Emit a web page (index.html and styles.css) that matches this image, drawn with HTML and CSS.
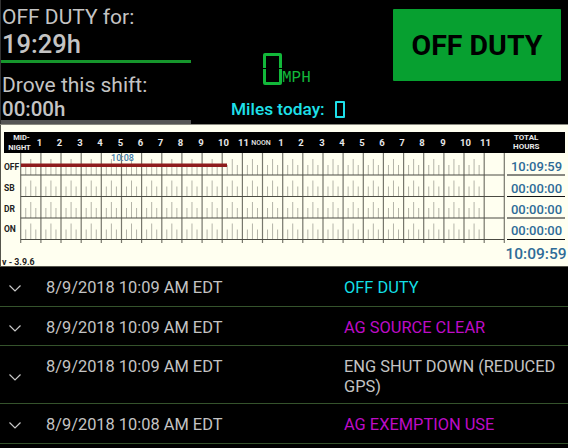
FILE: index.html
```html
<!DOCTYPE html>
<html lang="en">
  <head>
    <meta charset="UTF-8" />
    <meta name="viewport" content="width=device-width, initial-scale=1.0" />
    <title>Driver Log</title>
    <link rel="stylesheet" href="styles.css">
  </head>
  <body>
    <div class="top">
      <div class="status">
        <div class="status-block duty-block">
          <div class="status-label">OFF DUTY for:</div>
          <div class="status-time">19:29h</div>
        </div>
        <div class="status-block shift-block">
          <div class="status-label">Drove this shift:</div>
          <div class="status-small">00:00h</div>
        </div>
      </div>
      <div class="speed">
        <div class="speed-row">
          <span class="digit digit-big">0</span>
          <span class="mph">MPH</span>
        </div>
        <div class="miles">Miles today: <span class="digit digit-small">0</span></div>
      </div>
      <div class="duty-wrap">
        <div class="btn">OFF DUTY</div>
      </div>
    </div>

    <div class="chart">
      <svg class="chart-svg" viewBox="0 125 568 142" width="568" height="142">
        <defs>
          <path id="row-ticks" class="tick" d="M20.7 0m5.04 0v-10m5.04 10v-16m5.04 16v-10m5.03 10m5.04 0v-10m5.04 10v-16m5.04 16v-10m5.03 10m5.04 0v-10m5.04 10v-16m5.04 16v-10m5.03 10m5.04 0v-10m5.04 10v-16m5.04 16v-10m5.03 10m5.04 0v-10m5.04 10v-16m5.04 16v-10m5.03 10m5.04 0v-10m5.04 10v-16m5.04 16v-10m5.03 10m5.04 0v-10m5.04 10v-16m5.04 16v-10m5.03 10m5.04 0v-10m5.04 10v-16m5.04 16v-10m5.03 10m5.04 0v-10m5.04 10v-16m5.04 16v-10m5.03 10m5.04 0v-10m5.04 10v-16m5.04 16v-10m5.03 10m5.04 0v-10m5.04 10v-16m5.04 16v-10m5.03 10m5.04 0v-10m5.04 10v-16m5.04 16v-10m5.03 10m5.04 0v-10m5.04 10v-16m5.04 16v-10m5.03 10m5.04 0v-10m5.04 10v-16m5.04 16v-10m5.03 10m5.04 0v-10m5.04 10v-16m5.04 16v-10m5.03 10m5.04 0v-10m5.04 10v-16m5.04 16v-10m5.03 10m5.04 0v-10m5.04 10v-16m5.04 16v-10m5.03 10m5.04 0v-10m5.04 10v-16m5.04 16v-10m5.03 10m5.04 0v-10m5.04 10v-16m5.04 16v-10m5.03 10m5.04 0v-10m5.04 10v-16m5.04 16v-10m5.03 10m5.04 0v-10m5.04 10v-16m5.04 16v-10m5.03 10m5.04 0v-10m5.04 10v-16m5.04 16v-10m5.03 10m5.04 0v-10m5.04 10v-16m5.04 16v-10m5.03 10" />
        </defs>
        <rect class="head" x="4" y="132" width="561" height="21" />
        <use href="#row-ticks" y="175" />
        <use href="#row-ticks" y="196.5" />
        <use href="#row-ticks" y="218" />
        <use href="#row-ticks" y="239.5" />
        <path class="hour-lines" d="M20.7 153V243M40.9 153V243M61 153V243M81.2 153V243M101.3 153V243M121.5 153V243M141.6 153V243M161.8 153V243M181.9 153V243M202.1 153V243M222.2 153V243M242.4 153V243M262.5 153V243M282.7 153V243M302.8 153V243M323 153V243M343.1 153V243M363.3 153V243M383.4 153V243M403.6 153V243M423.7 153V243M443.9 153V243M464 153V243M484.2 153V243M504.3 153V243" />
        <path class="row-lines" d="M20.7 175H504.3M20.7 196.5H504.3M20.7 218H504.3M20.7 239.5H504.3" />
        <path class="total-lines" d="M507 175H565M507 196.5H565M507 218H565M507 239.5H565" />
        <rect class="off-bar" x="21" y="163.5" width="206" height="3.5" />
        <text class="now-label" x="122.5" y="161" text-anchor="middle">10:08</text>

        <text class="head-small" x="21.5" y="140" text-anchor="middle">MID-</text>
        <text class="head-small" x="19.5" y="149.5" text-anchor="middle">NIGHT</text>
        <text class="head-hour" x="39.5" y="145.5" text-anchor="middle">1</text>
        <text class="head-hour" x="59.5" y="145.5" text-anchor="middle">2</text>
        <text class="head-hour" x="80" y="145.5" text-anchor="middle">3</text>
        <text class="head-hour" x="100" y="145.5" text-anchor="middle">4</text>
        <text class="head-hour" x="120.5" y="145.5" text-anchor="middle">5</text>
        <text class="head-hour" x="140.5" y="145.5" text-anchor="middle">6</text>
        <text class="head-hour" x="160.5" y="145.5" text-anchor="middle">7</text>
        <text class="head-hour" x="180.5" y="145.5" text-anchor="middle">8</text>
        <text class="head-hour" x="201" y="145.5" text-anchor="middle">9</text>
        <text class="head-hour" x="223.5" y="145.5" text-anchor="middle">10</text>
        <text class="head-hour" x="243.5" y="145.5" text-anchor="middle">11</text>
        <text class="head-noon" x="261" y="144.5" text-anchor="middle">NOON</text>
        <text class="head-hour" x="281" y="145.5" text-anchor="middle">1</text>
        <text class="head-hour" x="301" y="145.5" text-anchor="middle">2</text>
        <text class="head-hour" x="322" y="145.5" text-anchor="middle">3</text>
        <text class="head-hour" x="342" y="145.5" text-anchor="middle">4</text>
        <text class="head-hour" x="362" y="145.5" text-anchor="middle">5</text>
        <text class="head-hour" x="382" y="145.5" text-anchor="middle">6</text>
        <text class="head-hour" x="402" y="145.5" text-anchor="middle">7</text>
        <text class="head-hour" x="422" y="145.5" text-anchor="middle">8</text>
        <text class="head-hour" x="443" y="145.5" text-anchor="middle">9</text>
        <text class="head-hour" x="465.5" y="145.5" text-anchor="middle">10</text>
        <text class="head-hour" x="485.5" y="145.5" text-anchor="middle">11</text>
        <text class="head-total" x="514" y="139.5">TOTAL</text>
        <text class="head-total" x="513" y="149">HOURS</text>

        <text class="row-label" x="4" y="170">OFF</text>
        <text class="row-label" x="4" y="191">SB</text>
        <text class="row-label" x="4" y="212">DR</text>
        <text class="row-label" x="4" y="232">ON</text>

        <text class="total" x="536.5" y="171" text-anchor="middle">10:09:59</text>
        <text class="total" x="536.5" y="192.5" text-anchor="middle">00:00:00</text>
        <text class="total" x="536.5" y="214" text-anchor="middle">00:00:00</text>
        <text class="total" x="536.5" y="235" text-anchor="middle">00:00:00</text>
        <text class="total-big" x="536" y="259" text-anchor="middle">10:09:59</text>
        <text class="version" x="2" y="265">v - 3.9.6</text>
      </svg>
    </div>

    <div class="log">
      <div class="log-row">
        <svg class="chevron" viewBox="0 0 12 7" width="12" height="7"><path d="M0.5 0.5L6 6L11.5 0.5" /></svg>
        <div class="log-date">8/9/2018 10:09 AM EDT</div>
        <div class="log-event cyan">OFF DUTY</div>
      </div>
      <div class="log-row">
        <svg class="chevron" viewBox="0 0 12 7" width="12" height="7"><path d="M0.5 0.5L6 6L11.5 0.5" /></svg>
        <div class="log-date">8/9/2018 10:09 AM EDT</div>
        <div class="log-event magenta">AG SOURCE CLEAR</div>
      </div>
      <div class="log-row">
        <svg class="chevron" viewBox="0 0 12 7" width="12" height="7"><path d="M0.5 0.5L6 6L11.5 0.5" /></svg>
        <div class="log-date">8/9/2018 10:09 AM EDT</div>
        <div class="log-event">ENG SHUT DOWN (REDUCED GPS)</div>
      </div>
      <div class="log-row">
        <svg class="chevron" viewBox="0 0 12 7" width="12" height="7"><path d="M0.5 0.5L6 6L11.5 0.5" /></svg>
        <div class="log-date">8/9/2018 10:08 AM EDT</div>
        <div class="log-event magenta">AG EXEMPTION USE</div>
      </div>
    </div>
  </body>
</html>
```

FILE: styles.css
```css
html,
body {
  margin: 0;
  padding: 0;
}
body {
  width: 568px;
  height: 448px;
  overflow: hidden;
  background-color: #000;
  font-family: Roboto, "Liberation Sans", sans-serif;
  color: #c4c4c4;
}
.top {
  display: flex;
  height: 125px;
  box-sizing: border-box;
  border-bottom: 1px solid #8a8a80;
}
.status {
  width: 190px;
  flex-shrink: 0;
  border-left: 1px solid #333;
  display: flex;
  flex-direction: column;
}
.status-block {
  padding-left: 1px;
}
.duty-block {
  height: 64px;
  box-sizing: border-box;
  padding-top: 5px;
  border-bottom: 3px solid #16962c;
}
.shift-block {
  height: 61px;
  box-sizing: border-box;
  padding-top: 10px;
  border-bottom: 4px solid #555;
}
.status-label {
  font-size: 21px;
  line-height: 24px;
}
.status-time {
  font-size: 25.5px;
  line-height: 31px;
  font-weight: 500;
}
.status-small {
  font-size: 20.5px;
  line-height: 25px;
  font-weight: 500;
}
.speed {
  width: 202px;
  flex-shrink: 0;
  display: flex;
  flex-direction: column;
  align-items: center;
  padding-top: 53px;
  box-sizing: border-box;
}
.speed-row {
  display: flex;
  align-items: flex-end;
  color: #12b83a;
  height: 32px;
  padding-right: 9px;
}
.digit {
  display: block;
  position: relative;
  box-sizing: border-box;
  color: transparent;
  overflow: visible;
}
.digit-big {
  width: 19px;
  height: 32px;
  border: 3px solid #12b83a;
  border-radius: 2px;
  font-size: 20px;
  line-height: 26px;
  text-align: center;
}
.digit-big::before {
  content: "";
  position: absolute;
  left: -3px;
  right: -3px;
  top: 12px;
  height: 1px;
  background-color: #000;
}
.mph {
  font-family: "Liberation Mono", monospace;
  font-size: 16px;
  line-height: 13px;
  width: 30px;
}
.miles {
  margin-top: 15px;
  padding-right: 8px;
  display: flex;
  align-items: flex-end;
  gap: 6px;
  font-size: 17.3px;
  line-height: 19px;
  font-weight: 500;
  color: #1ee0ea;
  white-space: pre;
}
.digit-small {
  width: 10px;
  height: 17px;
  border: 2px solid #1ee0ea;
  border-radius: 1px;
  margin-bottom: 1px;
  font-size: 9px;
  line-height: 13px;
  text-align: center;
}
.duty-wrap {
  padding-top: 9px;
}
.btn {
  width: 168px;
  height: 72px;
  display: flex;
  align-items: center;
  justify-content: center;
  background-color: #07a030;
  border-radius: 1px;
  color: #000;
  font-size: 28.5px;
  font-weight: 700;
}
.chart {
  height: 142px;
  background-color: #fffff0;
  box-shadow: inset 1px -1px 0 #55554c;
}
.chart-svg {
  display: block;
}
.head {
  fill: #000;
}
.tick {
  stroke: #b4b4a8;
  stroke-width: 1;
  fill: none;
}
.hour-lines {
  stroke: #77776c;
  stroke-width: 1.2;
  fill: none;
}
.row-lines {
  stroke: #4c4c44;
  stroke-width: 1.1;
  fill: none;
}
.total-lines {
  stroke: #111;
  stroke-width: 1;
  fill: none;
}
.off-bar {
  fill: #8e1c1c;
}
.now-label {
  font-size: 9px;
  font-weight: 500;
  fill: #3f7aa8;
}
.head-small {
  font-size: 7.5px;
  font-weight: 700;
  fill: #e8e8e8;
}
.head-noon {
  font-size: 7px;
  font-weight: 500;
  fill: #e8e8e8;
}
.head-total {
  font-size: 8px;
  font-weight: 700;
  fill: #e8e8e8;
}
.head-hour {
  font-size: 9.5px;
  font-weight: 700;
  fill: #e8e8e8;
}
.row-label {
  font-size: 8.5px;
  font-weight: 700;
  fill: #222;
}
.total {
  font-size: 13px;
  font-weight: 500;
  fill: #2f6c98;
}
.total-big {
  font-size: 15.5px;
  font-weight: 500;
  fill: #2f6c98;
}
.version {
  font-size: 8.8px;
  font-weight: 700;
  fill: #222;
}
.log-row {
  display: flex;
  align-items: flex-start;
  box-sizing: border-box;
  min-height: 39.5px;
  padding: 11px 0 6px;
  border-bottom: 1px solid #35532c;
  font-size: 16.4px;
  line-height: 20px;
}
.chevron {
  align-self: center;
  width: 12px;
  margin: 0 25px 0 9px;
  flex-shrink: 0;
}
.chevron path {
  stroke: #c8c8c8;
  stroke-width: 1.2;
  fill: none;
}
.log-date {
  width: 298px;
  flex-shrink: 0;
}
.log-event {
  flex: 1;
  padding-right: 8px;
}
.cyan {
  color: #12dfe6;
}
.magenta {
  color: #bd0cc6;
}
```
